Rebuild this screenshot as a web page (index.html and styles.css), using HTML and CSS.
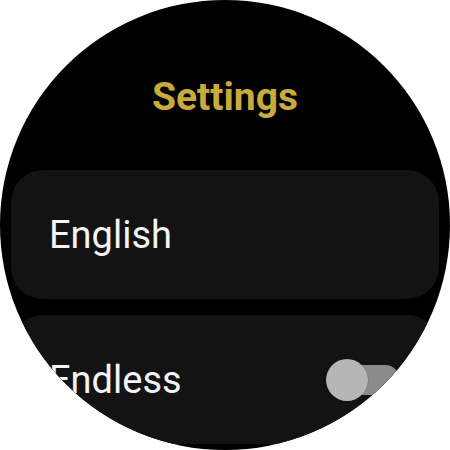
FILE: index.html
```html
<!DOCTYPE html>
<html>
<head>
<meta charset="utf-8">
<link rel="stylesheet" href="styles.css">
</head>
<body>
<div class="watch">
  <h1 class="title">Settings</h1>
  <div class="list">
    <div class="card">
      <span class="label">English</span>
    </div>
    <div class="card">
      <span class="label">Endless</span>
      <div class="toggle">
        <div class="track"></div>
        <div class="thumb"></div>
      </div>
    </div>
  </div>
</div>
</body>
</html>
```
FILE: styles.css
```css
html, body {
  margin: 0;
  padding: 0;
  background: #ffffff;
}
.watch {
  width: 450px;
  height: 450px;
  border-radius: 50%;
  overflow: hidden;
  background: #000000;
  display: flex;
  flex-direction: column;
  font-family: Roboto, "Noto Sans", sans-serif;
}
.title {
  margin: 77px 0 0 0;
  height: 40px;
  line-height: 40px;
  font-size: 39px;
  font-weight: 700;
  color: #c9ab3b;
  text-align: center;
}
.list {
  margin-top: 53px;
  display: flex;
  flex-direction: column;
  gap: 16px;
  padding: 0 11px;
}
.card {
  height: 129px;
  border-radius: 32px;
  background: #131313;
  display: flex;
  align-items: center;
  justify-content: space-between;
  padding: 0 39px 0 38px;
}
.label {
  font-size: 38px;
  color: #f4f4f4;
  line-height: 40px;
}
.toggle {
  position: relative;
  width: 74px;
  height: 42px;
}
.track {
  position: absolute;
  left: 6px;
  right: 0;
  top: 6px;
  height: 30px;
  border-radius: 15px;
  background: #8b8b8b;
}
.thumb {
  position: absolute;
  left: 0;
  top: 0;
  width: 42px;
  height: 42px;
  border-radius: 50%;
  background: #b6b6b6;
  box-shadow: 0 0 1px rgba(0,0,0,0.5);
}
```
